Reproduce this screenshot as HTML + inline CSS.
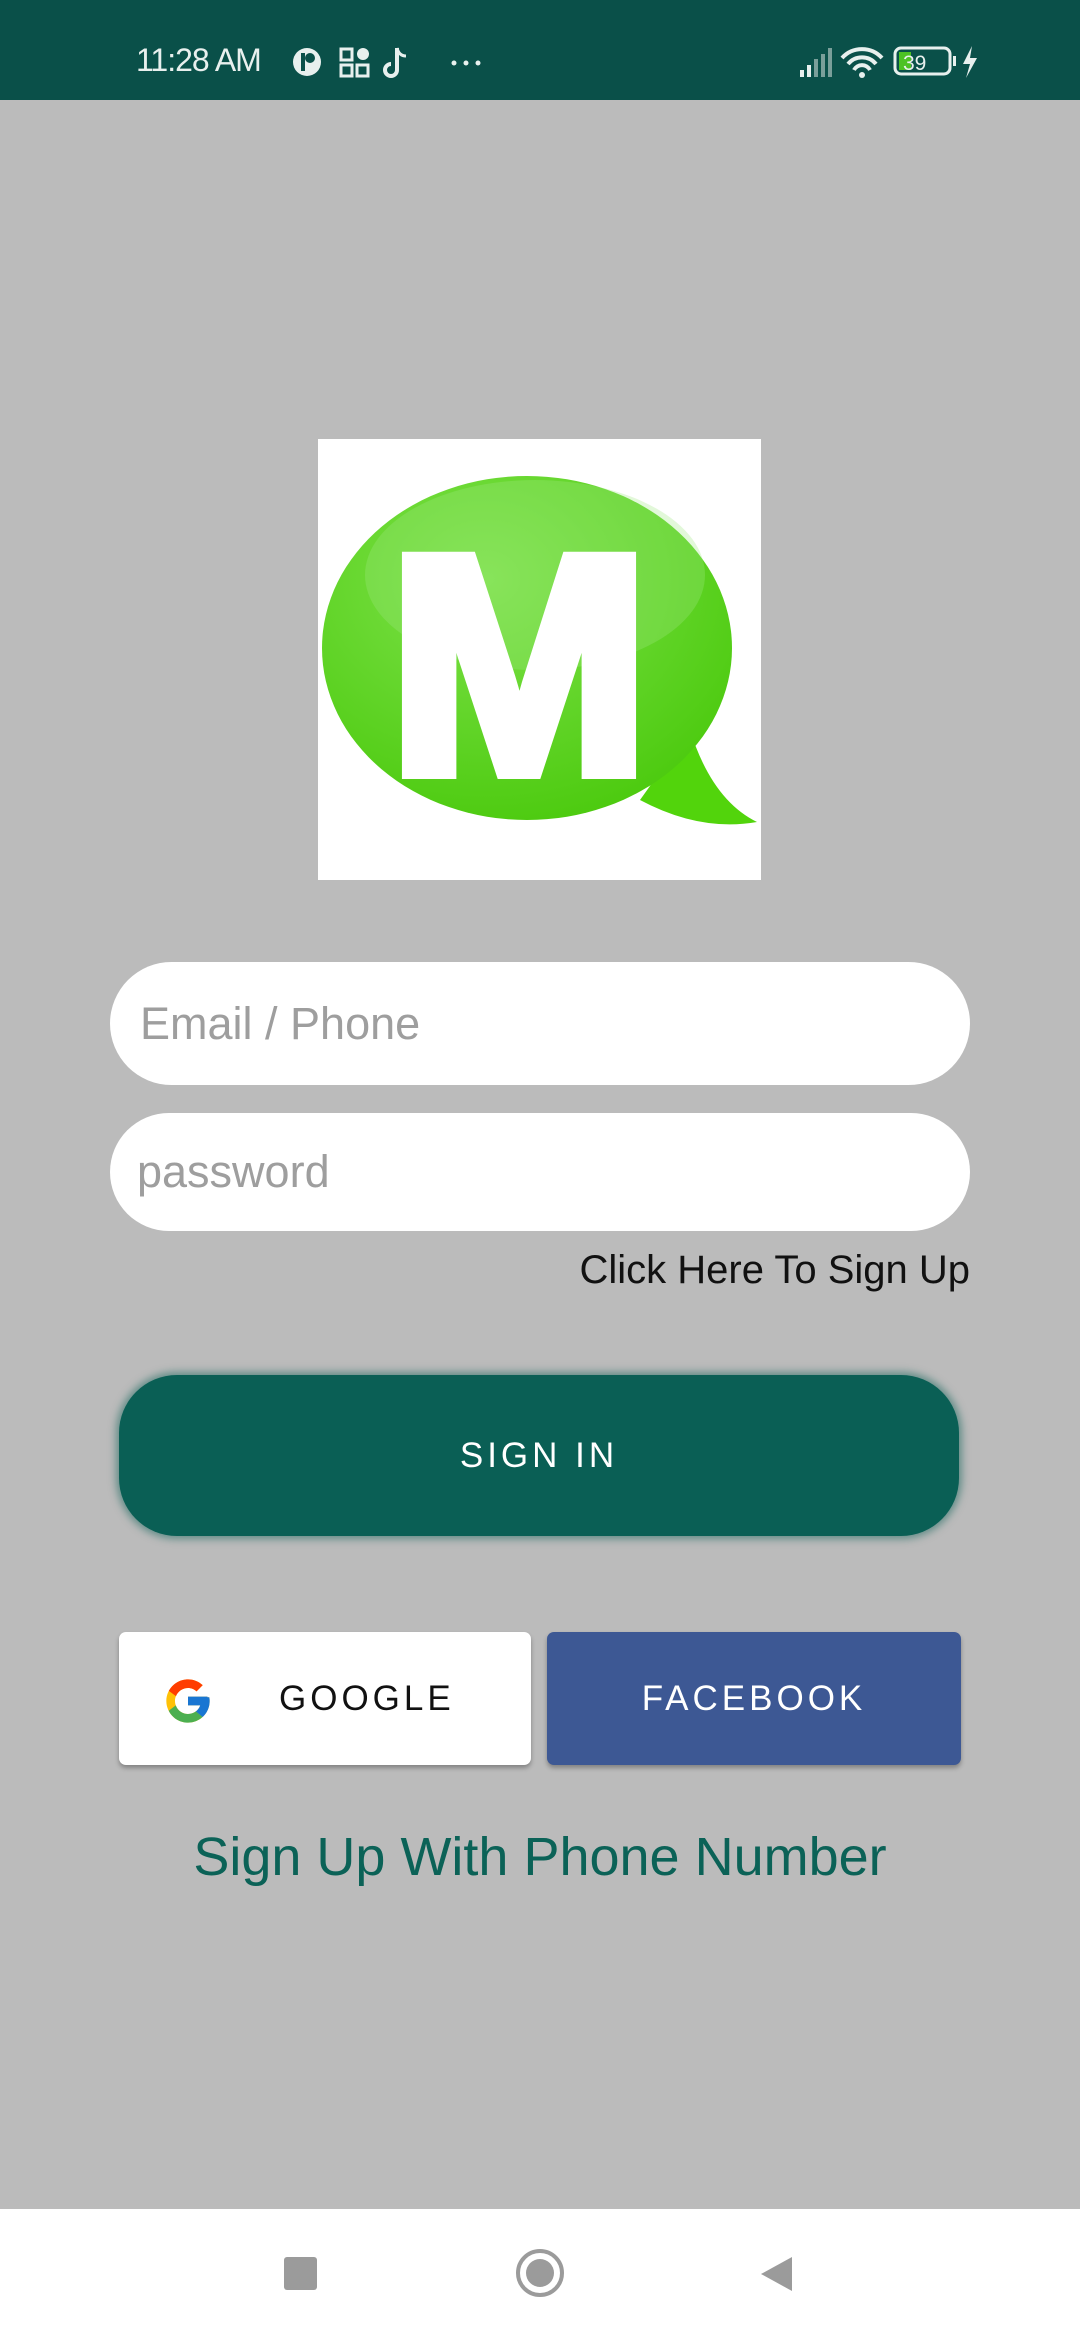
<!DOCTYPE html>
<html><head><meta charset="utf-8"><style>
*{margin:0;padding:0;box-sizing:border-box}
body{width:1080px;height:2340px;background:#bbbbbb;font-family:"Liberation Sans",Roboto,sans-serif;position:relative;overflow:hidden}
.abs{position:absolute}
.sb{left:0;top:0;width:1080px;height:100px;background:#0a5049;color:#e8f0ee}
.field{background:#fff;border-radius:62px;color:#9e9e9e;font-size:45px;display:flex;align-items:center}
.btn{display:flex;align-items:center;justify-content:center;font-size:35px;letter-spacing:4px}
</style></head><body>
<div class="abs sb">
 <div class="abs" style="left:136px;top:42px;font-size:32px;letter-spacing:-1px">11:28 AM</div>
 <svg class="abs" style="left:290px;top:44px" width="240" height="36" viewBox="0 0 240 36">
  <circle cx="17" cy="18" r="14" fill="#e8f0ee"/><circle cx="20" cy="14" r="5" fill="#0a5049"/><rect x="11" y="9" width="4" height="18" fill="#0a5049"/>
  <rect x="51" y="5" width="11" height="11" fill="none" stroke="#e8f0ee" stroke-width="3"/><circle cx="73" cy="10" r="6" fill="#e8f0ee"/>
  <rect x="51" y="21" width="11" height="11" fill="none" stroke="#e8f0ee" stroke-width="3"/><rect x="67" y="21" width="11" height="11" fill="none" stroke="#e8f0ee" stroke-width="3"/>
  <path d="M107 4 V26 a6 6 0 1 1 -6 -6" fill="none" stroke="#e8f0ee" stroke-width="4"/><path d="M107 4 q2 8 9 8" fill="none" stroke="#e8f0ee" stroke-width="3"/>
  <circle cx="164" cy="19" r="2.5" fill="#e8f0ee"/><circle cx="176" cy="19" r="2.5" fill="#e8f0ee"/><circle cx="188" cy="19" r="2.5" fill="#e8f0ee"/>
 </svg>
 <svg class="abs" style="left:800px;top:44px" width="230" height="36" viewBox="0 0 230 36">
  <rect x="0" y="26" width="4" height="7" fill="#e8f0ee"/><rect x="7" y="21" width="4" height="12" fill="#e8f0ee"/><rect x="14" y="15" width="4" height="18" fill="#7a9f9a"/><rect x="21" y="10" width="4" height="23" fill="#7a9f9a"/><rect x="28" y="4" width="4" height="29" fill="#7a9f9a"/>
  <path d="M42 14 a27 27 0 0 1 40 0 M48 20 a18 18 0 0 1 28 0 M54 26 a9 9 0 0 1 16 0" fill="none" stroke="#e8f0ee" stroke-width="4"/><circle cx="62" cy="31" r="3" fill="#e8f0ee"/>
  <rect x="95" y="4" width="55" height="26" rx="6" fill="none" stroke="#e8f0ee" stroke-width="3"/><rect x="99" y="8" width="12" height="18" fill="#4cc224"/>
  <text x="103" y="26" font-size="21" fill="#e8f0ee" font-family="Liberation Sans">39</text><rect x="153" y="12" width="3" height="10" fill="#e8f0ee"/>
  <path d="M172 2 L163 20 H170 L166 34 L177 14 H170 Z" fill="#e8f0ee"/>
 </svg>
</div>
<svg class="abs" style="left:318px;top:439px" width="443" height="441" viewBox="318 439 443 441">
 <defs><radialGradient id="g" cx="0.4" cy="0.3" r="0.8"><stop offset="0" stop-color="#7ee24a"/><stop offset="1" stop-color="#48c80a"/></radialGradient></defs>
 <rect x="318" y="439" width="443" height="441" fill="#fff"/>
 <path d="M690 730 L640 800 Q700 832 757 822 Q712 800 690 730 Z" fill="#52d40c"/>
 <ellipse cx="527" cy="648" rx="205" ry="172" fill="url(#g)"/>
 <ellipse cx="535" cy="575" rx="170" ry="95" fill="#a0e880" opacity="0.3"/>
 <text x="388" y="772" style="font-family:'Liberation Sans',Arial,sans-serif;font-weight:bold" font-weight="bold" font-size="310" fill="#fff" stroke="#fff" stroke-width="14" stroke-linejoin="miter" textLength="262" lengthAdjust="spacingAndGlyphs">M</text>
</svg>
<div class="abs field" style="left:110px;top:962px;width:860px;height:123px;padding-left:30px">Email / Phone</div>
<div class="abs field" style="left:110px;top:1113px;width:860px;height:118px;padding-left:27px">password</div>
<div class="abs" style="right:110px;top:1248px;font-size:40px;color:#111">Click Here To Sign Up</div>
<div class="abs btn" style="left:119px;top:1375px;width:840px;height:161px;background:#0a5f55;border-radius:58px;color:#fff;box-shadow:0 0 8px 3px rgba(10,95,85,.5);font-weight:500">SIGN IN</div>
<div class="abs btn" style="left:119px;top:1632px;width:412px;height:133px;background:#fff;border-radius:7px;color:#111;box-shadow:0 3px 5px rgba(0,0,0,.3);justify-content:flex-start;padding-left:160px">GOOGLE</div>
<svg class="abs" style="left:162px;top:1675px" width="52" height="52" viewBox="0 0 48 48">
 <path d="M43.6 20.5H42V20H24v8h11.3C33.7 32.7 29.2 36 24 36c-6.6 0-12-5.4-12-12s5.4-12 12-12c3.1 0 5.8 1.2 7.9 3.1l5.7-5.7C34 6.1 29.3 4 24 4 13 4 4 13 4 24s9 20 20 20 20-9 20-20c0-1.3-.1-2.4-.4-3.5z" fill="#FFC107"/>
 <path d="M6.3 14.7l6.6 4.8C14.7 15.1 19 12 24 12c3.1 0 5.8 1.2 7.9 3.1l5.7-5.7C34 6.1 29.3 4 24 4 16.3 4 9.7 8.3 6.3 14.7z" fill="#FF3D00"/>
 <path d="M24 44c5.2 0 9.900-2 13.4-5.2l-6.2-5.2C29.2 35.1 26.7 36 24 36c-5.2 0-9.600-3.3-11.3-8l-6.5 5C9.5 39.6 16.2 44 24 44z" fill="#4CAF50"/>
 <path d="M43.6 20.5H42V20H24v8h11.3c-.8 2.2-2.2 4.2-4.1 5.6l6.2 5.2C37 39.2 44 34 44 24c0-1.3-.1-2.4-.4-3.5z" fill="#1976D2"/>
</svg>
<div class="abs btn" style="left:547px;top:1632px;width:414px;height:133px;background:#3d5894;border-radius:7px;color:#fff;box-shadow:0 3px 5px rgba(0,0,0,.3);font-weight:500">FACEBOOK</div>
<div class="abs" style="left:0;width:1080px;top:1826px;text-align:center;font-size:54px;color:#0b6257">Sign Up With Phone Number</div>
<div class="abs" style="left:0;top:2209px;width:1080px;height:131px;background:#fff">
 <div class="abs" style="left:284px;top:48px;width:33px;height:33px;background:#9b9b9b;border-radius:3px"></div>
 <div class="abs" style="left:516px;top:40px;width:48px;height:48px;border:4px solid #9b9b9b;border-radius:50%"></div>
 <div class="abs" style="left:526px;top:50px;width:28px;height:28px;background:#9b9b9b;border-radius:50%"></div>
 <svg class="abs" style="left:758px;top:46px" width="36" height="38"><path d="M34 2 V36 L3 19 Z" fill="#9b9b9b"/></svg>
</div>
</body></html>
